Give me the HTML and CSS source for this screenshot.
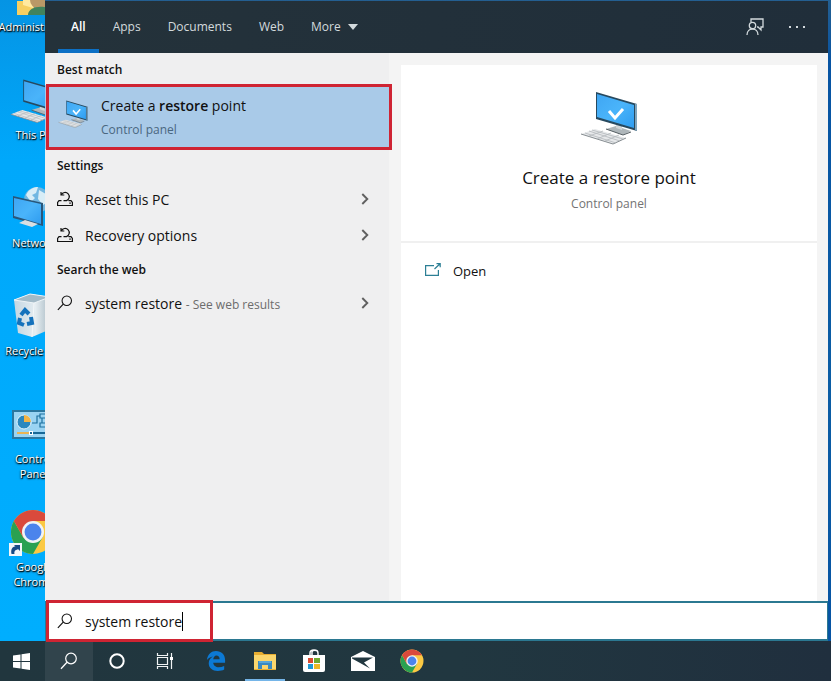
FILE: index.html
```html
<!DOCTYPE html>
<html lang="en">
<head>
<meta charset="utf-8">
<title>Windows Search</title>
<link rel="stylesheet" href="styles.css">
</head>
<body>
<svg class="sprite" aria-hidden="true">
  <defs>
    <linearGradient id="screen" x1="0" y1="0" x2="1" y2="1"><stop offset="0" stop-color="#3fa6f3"/><stop offset=".5" stop-color="#4ab4fa"/><stop offset="1" stop-color="#2e9cf0"/></linearGradient>
    <linearGradient id="bin" x1="0" y1="0" x2="1" y2="0"><stop offset="0" stop-color="#c3d6e2"/><stop offset=".6" stop-color="#e5edf1"/><stop offset="1" stop-color="#a9bac4"/></linearGradient>
  </defs>
  <symbol id="pc" viewBox="0 0 58 54">
    <path d="M26 38l10-3 15 5-8 4z" fill="#aeb6ba"/><path d="M26 38l17 6 8-3" fill="none" stroke="#555e63"/>
    <path d="M36 33h6v6l-6-2z" fill="#d0d5d7"/>
    <path d="M16 1l41 12v27L16 28z" fill="#27495f"/>
    <path d="M55 13l2 0v27l-2-1z" fill="#7fa5bd"/>
    <path d="M17 3l37 11v23L17 26z" fill="url(#screen)"/>
    <path d="M1 43l14-5 31 9-13 6z" fill="#e6e8ea"/>
    <path d="M1 43l32 10 13-6" fill="none" stroke="#858c90"/>
    <path d="M5 42l31 10M9 40l31 10M12 39l31 9M9 45l14-5M17 48l14-6M25 50l14-6" fill="none" stroke="#b3b8bb" stroke-width=".8"/>
  </symbol>
  <symbol id="pc-check" viewBox="0 0 58 54"><use href="#pc" width="58" height="54"/><path d="M29 20l6 7 8-9" fill="none" stroke="#fff" stroke-width="3"/></symbol>
  <symbol id="magnifier" viewBox="0 0 18 18"><circle cx="11" cy="6.500" r="5.300" fill="none" stroke="currentColor" stroke-width="1.200"/><path d="M7 10.300L1 16.800" stroke="currentColor" stroke-width="1.300"/></symbol>
  <symbol id="reset" viewBox="0 0 16 16"><path d="M4.500 9.600H2L.6 11.500v3h14.800v-3L14 9.600h-2.500M4 1v3h3.300M4.300 3.800A4.200 4.200 0 1 1 9.500 9.600H6.500M12.300 12.200h1.500" fill="none" stroke="currentColor" stroke-width="1.200"/></symbol>
  <symbol id="chevron" viewBox="0 0 8 12"><path d="M1.300 1l5 5-5 5" fill="none" stroke="currentColor" stroke-width="1.900"/></symbol>
  <symbol id="chrome" viewBox="0 0 48 48">
    <circle cx="24" cy="24" r="23" fill="#fbc943"/>
    <path d="M24 24L4.100 12.500A23 23 0 0 1 43.900 12.500H24z" fill="#da4a3c"/>
    <path d="M4.100 12.500A23 23 0 0 0 24 47l10-17.500-10-5.500-10 6z" fill="#2aa152"/>
    <path d="M4.100 12.500L14 30l10-17.500z" fill="#da4a3c"/>
    <circle cx="24" cy="24" r="11.500" fill="#f1f3f5"/><circle cx="24" cy="24" r="8.800" fill="#4b84ec"/>
  </symbol>
</svg>

<main class="workspace">
  <section class="desktop" aria-label="Desktop">
    <a class="shortcut" href="#admin"><svg class="shortcut-icon" viewBox="0 0 48 48"><path d="M7 32h17v14H7z" fill="#f6cf62"/><path d="M13 30h10v9l-10-3z" fill="#ffe9a0"/><circle cx="29" cy="31" r="9" fill="#b99867"/><path d="M18 46c0-11 25-11 25 0z" fill="#41835c"/></svg><span>Administrator</span></a>
    <a class="shortcut" href="#pc-folder"><svg class="shortcut-icon"><use href="#pc"/></svg><span>This PC</span></a>
    <a class="shortcut" href="#network"><svg class="shortcut-icon" viewBox="0 0 48 48"><circle cx="27" cy="15" r="13" fill="#71b7e2"/><path d="M16 10c3-7 9-8 12-8l-2 6-4 2 3 3-4 4zM29 5l7 4 3 7-6 4-5-6z" fill="#d8edf7"/><path d="M3 11l30 7v23L3 33z" fill="#28567a"/><path d="M4 13l27 6v20L4 31z" fill="url(#screen)"/><path d="M9 38l6-3 13 4-6 3z" fill="#d9dfe2"/></svg><span>Network</span></a>
    <a class="shortcut" href="#bin"><svg class="shortcut-icon" viewBox="0 0 48 48"><path d="M4 7L20 1l20 3-4 34-14 6-14-4z" fill="url(#bin)"/><path d="M4 7l16-6 20 3-16 6z" fill="#a3bac7" stroke="#eef4f7"/><path d="M24 10l-2 34" stroke="#f3f7f9"/><g fill="none" stroke="#1472bc" stroke-width="4"><path d="M11 22l4-5 4 4M21 24l1 6-5 1M14 32l-5-2 1-5"/></g></svg><span>Recycle Bin</span></a>
    <a class="shortcut" href="#control"><svg class="shortcut-icon" viewBox="0 0 48 48"><path d="M2 9h44v29H2z" fill="#2b779f"/><path d="M4 11h40v25H4z" fill="#9ad4f3"/><circle cx="14" cy="21" r="7" fill="#2c88be" stroke="#e4f5fc"/><path d="M14 21v-7a7 7 0 0 1 7 7z" fill="#f4b446"/><path d="M22 22h5v-7h3M30 13h6v4h-6zM32 17v5M30 22h6v4h-6z" fill="none" stroke="#1f719f" stroke-width="1.200"/><path d="M7 32h12" stroke="#eab454" stroke-width="2"/><path d="M20 32h20" stroke="#176796" stroke-width="2"/><path d="M19 30h4v4h-4z" fill="#fff"/><path d="M20 31h2v2h-2z" fill="#176796"/></svg><span>Control<br>Panel</span></a>
    <a class="shortcut" href="#chrome-app"><svg class="shortcut-icon" viewBox="0 0 48 48"><use href="#chrome" width="46" height="46"/><path d="M-1 34h13v13H-1z" fill="#f4f7fa"/><path d="M1.500 45c-1-5 1-7.500 4-7.500L4 36h6v6l-1.800-1.800C5 41 4 42 4.500 45z" fill="#174b87"/></svg><span>Google<br>Chrome</span></a>
  </section>

  <section class="search" aria-label="Search">
    <nav class="tabs" aria-label="Search filters">
      <button class="tab active">All</button>
      <button class="tab">Apps</button>
      <button class="tab">Documents</button>
      <button class="tab">Web</button>
      <button class="tab">More <svg class="caret-down" viewBox="0 0 10 6"><path d="M0 0h10L5 6z" fill="currentColor"/></svg></button>
      <div class="tools">
        <button class="tool" aria-label="Feedback"><svg class="feedback" viewBox="0 0 18 18"><g fill="none" stroke="currentColor" stroke-width="1.300"><path d="M5 4V1h12v8h-2v3l-3-3h-1"/><circle cx="6.500" cy="7.500" r="3.200"/><path d="M1 17c0-8 11-8 11 0"/></g></svg></button>
        <button class="tool" aria-label="Options"><svg class="dots" viewBox="0 0 16 4"><path d="M0 1h2v2H0zM7 1h2v2H7zM14 1h2v2h-2z" fill="currentColor"/></svg></button>
      </div>
    </nav>

    <div class="content">
      <div class="results">
        <h2>Best match</h2>
        <a class="best" href="#restore-point"><svg class="best-icon"><use href="#pc-check"/></svg><span class="best-text"><span class="name">Create a <b>restore</b> point</span><span class="kind">Control panel</span></span></a>
        <h2>Settings</h2>
        <a class="row" href="#reset-pc"><svg class="row-icon"><use href="#reset"/></svg><span>Reset this PC</span><svg class="chevron"><use href="#chevron"/></svg></a>
        <a class="row" href="#recovery"><svg class="row-icon"><use href="#reset"/></svg><span>Recovery options</span><svg class="chevron"><use href="#chevron"/></svg></a>
        <h2>Search the web</h2>
        <a class="row" href="#web"><svg class="row-icon"><use href="#magnifier"/></svg><span>system restore <small>- See web results</small></span><svg class="chevron"><use href="#chevron"/></svg></a>
      </div>
      <article class="preview">
        <header class="summary">
          <svg class="hero"><use href="#pc-check"/></svg>
          <h1>Create a restore point</h1>
          <p>Control panel</p>
        </header>
        <a class="open" href="#open"><svg class="open-icon" viewBox="0 0 16 13"><path d="M9 2.600H.6v9.800h12.800V7M9.500 6L15 .8M11.500.7h3.700v3.600" fill="none" stroke="#2c7f95" stroke-width="1.200"/></svg>Open</a>
      </article>
    </div>

    <div class="searchbox">
      <label class="query"><svg class="row-icon"><use href="#magnifier"/></svg><input type="text" value="system restore" size="10" aria-label="Search query"><span class="text-cursor"></span></label>
    </div>
  </section>
</main>

<footer class="taskbar">
  <button class="task start" aria-label="Start"><svg width="17" height="17" viewBox="0 0 17 17"><path d="M0 2.500L7.500 1.400V8H0zM8.500 1.200L17 0v8H8.500zM0 9h7.500v6.600L0 14.500zM8.500 9H17v8l-8.500-1.200z" fill="#fff"/></svg></button>
  <button class="task selected" aria-label="Search"><svg width="18" height="18"><use href="#magnifier"/></svg></button>
  <button class="task" aria-label="Cortana"><svg width="16" height="16" viewBox="0 0 16 16"><circle cx="8" cy="8" r="6.700" fill="none" stroke="#fff" stroke-width="2"/></svg></button>
  <button class="task" aria-label="Task view"><svg width="18" height="16" viewBox="0 0 18 16"><path d="M1.500 0v2.500h10V0M1.500 16v-2.500h10V16M1.500 4.500h10v7h-10zM15.500 0v16" fill="none" stroke="#f0f3f4" stroke-width="1.200"/><path d="M14 4h3v3h-3z" fill="#fff"/></svg></button>
  <div class="apps">
    <button class="task" aria-label="Edge"><svg width="20" height="20" viewBox="0 0 22 22"><path d="M1 10C2 3 6 0 11 0c6 0 10 4 10 10v3H8c0 3 3 5 6 5 2 0 4-.6 6-1.600v4C18 21.500 16 22 13 22 7 22 3 18.500 3 13.500 3 10 5 7.500 7.500 6 5 6.500 2.500 8 1 10zM8 9h7c0-2.500-1.500-4-3.500-4S8.200 7 8 9z" fill="#0c79d4"/></svg></button>
    <button class="task running" aria-label="File Explorer"><svg width="22" height="20" viewBox="0 0 22 20"><path d="M0 1h8l2 2h12v16H0z" fill="#e7ad31"/><path d="M0 4h22v14H0z" fill="#fad66d"/><path d="M4 18v-8h14v8h-4v-4H8v4z" fill="#3989c1"/><path d="M5 10h12v2H5z" fill="#58a6d7"/></svg></button>
    <button class="task" aria-label="Microsoft Store"><svg width="24" height="24" viewBox="0 0 24 24"><path d="M8 7V4c0-4 8-4 8 0v3M10 6V3c0-2 6-3 6 1" fill="none" stroke="#fff" stroke-width="1.400"/><path d="M1 6h22v15q0 2-2 2H3q-2 0-2-2z" fill="#fff"/><path d="M6 9h5v5H6z" fill="#d94a32"/><path d="M12 9h6v5h-6z" fill="#6faa30"/><path d="M6 15h5v5H6z" fill="#2199d4"/><path d="M12 15h6v5h-6z" fill="#eeb827"/></svg></button>
    <button class="task" aria-label="Mail"><svg width="24" height="20" viewBox="0 0 24 20"><path d="M0 6L12 0l12 6v14H0z" fill="#fff"/><path d="M1 6.500h21l-9 5 6 6L1 7.500z" fill="#213740"/></svg></button>
    <button class="task" aria-label="Chrome"><svg width="24" height="24"><use href="#chrome"/></svg></button>
  </div>
</footer>
</body>
</html>
```
FILE: styles.css
```css
* { box-sizing: border-box; }

body {
  margin: 0;
  min-height: 100vh;
  display: flex;
  flex-direction: column;
  font-family: "Open Sans", "Noto Sans", sans-serif;
  font-size: 14px;
  line-height: 20px;
  color: #111;
}

.sprite { position: absolute; width: 0; height: 0; }
svg { display: block; flex: none; }
a { color: inherit; text-decoration: none; }
button { border: 0; padding: 0; background: none; color: inherit; font: inherit; }
h1, h2, p { margin: 0; font-weight: 400; }

.workspace {
  flex: 1;
  display: grid;
  grid-template-columns: 45px minmax(0, 1fr);
  padding: 1px 3px 0 0;
  background: linear-gradient(#245f91, #0754a3 10%, #0b5da5 60%, #0754a3);
}

/* Desktop */
.desktop {
  margin-top: -1px;
  overflow: hidden;
  background: linear-gradient(#0594e4, #00a8fb 25%, #00aefe);
}
.shortcut {
  display: flex;
  flex-direction: column;
  align-items: center;
  gap: 2px;
  width: 72px;
  height: 108px;
  margin-left: -2px;
  color: #fff;
  font-size: 11px;
  line-height: 15px;
  text-align: center;
  text-shadow: 0 1px 2px #000, 1px 1px 1px #000;
}
.shortcut:first-child { margin-top: -31px; }
.shortcut-icon { width: 48px; height: 48px; overflow: visible; }

/* Search panel */
.search { display: flex; flex-direction: column; min-width: 0; background: #f4f4f4; }

.tabs {
  display: flex;
  gap: 1px;
  height: 52px;
  padding-left: 13px;
  background: linear-gradient(90deg, #24323a, #202e3a);
  color: #d3dadd;
  font-size: 12px;
}
.tab {
  display: flex;
  align-items: center;
  gap: 7px;
  padding: 0 13px;
  border: solid transparent;
  border-width: 3px 0 4px;
}
.tab.active { border-bottom-color: #0c70c5; color: #fff; font-weight: 600; }
.caret-down { width: 10px; height: 6px; }
.tools { display: flex; align-items: center; gap: 25px; margin-left: auto; padding-right: 23px; }
.feedback { width: 18px; height: 18px; }
.dots { width: 16px; height: 4px; }

.content { flex: 1; display: grid; grid-template-columns: 344px minmax(0, 1fr); }
.results { background: #efeff0; }
.results h2 { padding: 2px 0 0 12px; font-size: 12px; font-weight: 600; line-height: 30px; }

.best {
  position: relative;
  display: flex;
  align-items: center;
  gap: 12px;
  height: 64px;
  padding-left: 12px;
  background: #a9cae8;
}
.best::after { content: ""; position: absolute; inset: -1px -3px -1px 1px; border: 3px solid #cf2433; }
.best-icon { width: 32px; height: 28px; margin-bottom: 6px; }
.best-text { display: flex; flex-direction: column; gap: 4px; padding-top: 2px; }
.kind { color: #49677f; font-size: 12px; }
.name b { font-weight: 600; }

.row { display: flex; align-items: center; gap: 12px; height: 36px; padding: 0 20px 0 12px; }
.row span { padding-top: 2px; }
.row-icon { width: 16px; height: 16px; }
.row small { color: #6c6c6c; font-size: 12px; }
.chevron { width: 8px; height: 12px; margin-left: auto; color: #606060; }

.preview { margin: 12px 11px 0 12px; background: #fff; }
.summary {
  display: flex;
  flex-direction: column;
  align-items: center;
  height: 178px;
  padding-top: 26px;
  border-bottom: 2px solid #f0f0f0;
}
.hero { width: 58px; height: 54px; }
.summary h1 { margin-top: 21px; font-size: 17px; line-height: 24px; }
.summary p { margin-top: 4px; color: #737373; font-size: 12px; }
.open { display: flex; align-items: center; gap: 12px; padding: 18px 24px; font-size: 13px; }
.open-icon { width: 16px; height: 13px; margin-bottom: 4px; }

.searchbox { height: 40px; border: solid #2b7891; border-width: 2px 1px; background: #fff; }
.query { position: relative; display: flex; align-items: center; width: 167px; height: 36px; padding-left: 11px; gap: 12px; }
.query::after { content: ""; position: absolute; inset: -3px 0 -3px 0; border: 3px solid #cf2433; }
.query input {
  field-sizing: content;
  border: 0;
  padding: 2px 0 0;
  outline: 0;
  background: none;
  color: inherit;
  font: inherit;
}
.text-cursor { width: 1px; height: 19px; margin-left: -12px; background: #000; }

/* Taskbar */
.taskbar { display: flex; height: 40px; background: linear-gradient(90deg, #21363e, #213740 55%, #202f3e); color: #fff; }
.task { display: flex; align-items: center; justify-content: center; width: 48px; border: solid transparent; border-width: 2px 0; }
.task.start { width: 45px; padding-right: 3px; }
.task.selected { background: #31444c; }
.apps { display: flex; gap: 9px; padding-left: 7px; }
.apps .task { width: 40px; }
.apps .running { border-bottom-color: #75b5e8; }
```
